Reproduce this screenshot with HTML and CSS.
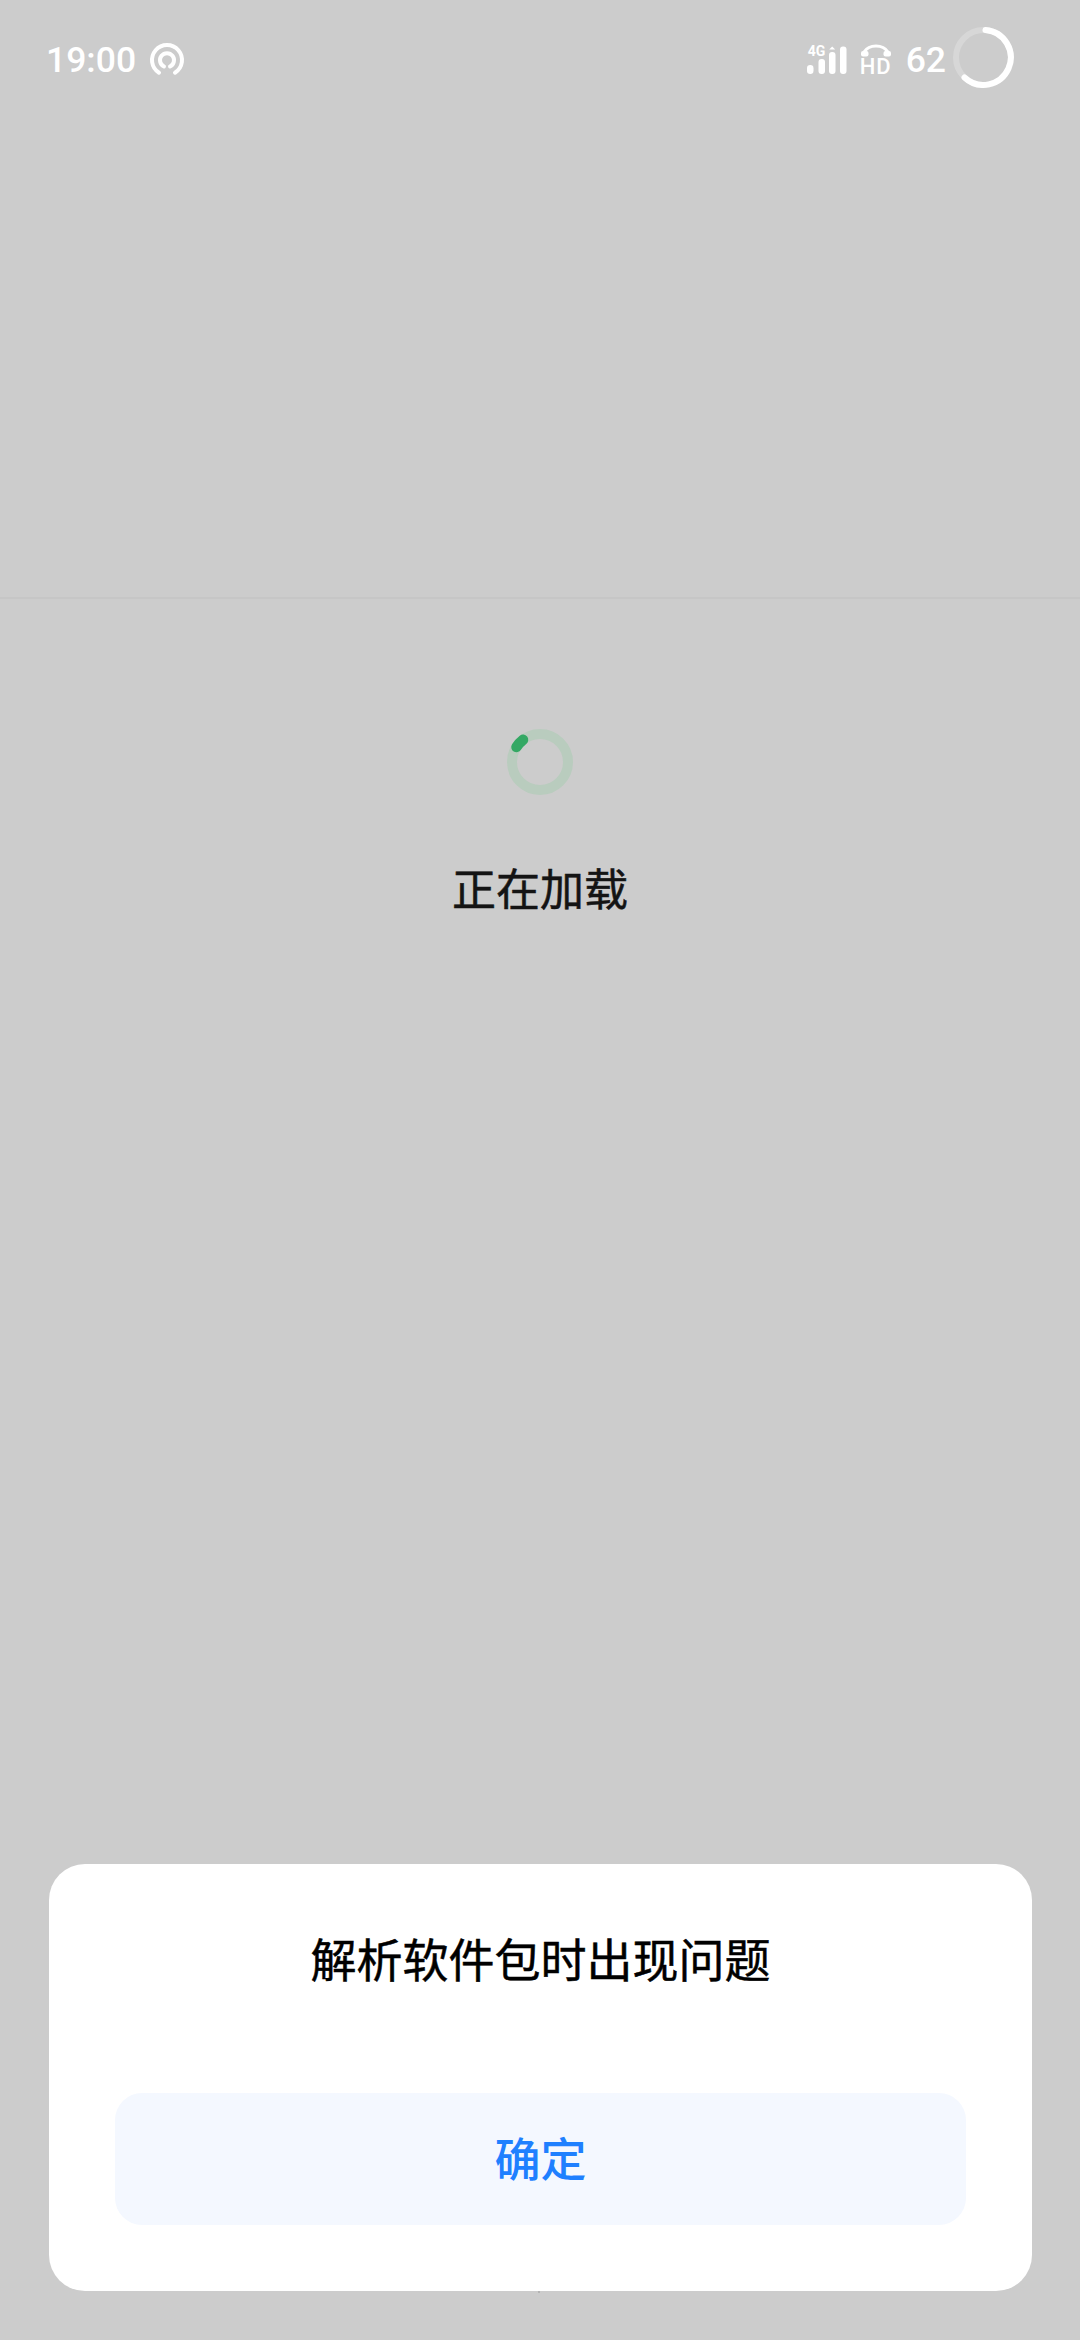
FILE: index.html
```html
<!DOCTYPE html>
<html lang="zh-CN">
<head>
<meta charset="utf-8">
<title>正在加载</title>
<link rel="stylesheet" href="styles.css">
</head>
<body>
<div class="screen">
  <header class="top">
    <div class="status">
      <div class="status-left">
        <span class="status-text">19:00</span>
        <svg class="cast" width="36" height="36" viewBox="0 0 36 36" fill="none" stroke="#fff" stroke-linecap="round">
          <path stroke-width="4" d="M10 30.700A15 15 0 1 1 26 30.700"/>
          <path stroke-width="4" d="M15 24.500A7 7 0 1 1 21 24.500"/>
        </svg>
      </div>
      <div class="status-right">
        <div class="signal">
          <span class="net">4G</span>
          <svg width="40" height="28" viewBox="0 0 40 28" fill="#fff">
            <rect x="0" y="19" width="6.500" height="9" rx="3.200"/>
            <rect x="11.500" y="13" width="6.500" height="15" rx="3"/>
            <rect x="22" y="6" width="6.500" height="22" rx="3"/>
            <path d="M25.200 0.500l3 3h-6z"/>
            <rect x="33" y="0.500" width="6.500" height="27.500" rx="3"/>
          </svg>
        </div>
        <div class="hd">
          <svg width="30" height="13" viewBox="0 0 30 13" fill="#fff">
            <path fill="none" stroke="#fff" stroke-width="3" d="M3 8C6 3.500 10 2 15 2S24 3.500 27 8"/>
            <rect x="0" y="7" width="7.500" height="5.500" rx="2"/>
            <rect x="22.500" y="7" width="7.500" height="5.500" rx="2"/>
          </svg>
          <span class="hd-label">HD</span>
        </div>
        <span class="status-text battery-num">62</span>
        <svg class="battery" width="61" height="61" viewBox="0 0 61 61" fill="none">
          <circle cx="30.500" cy="30.500" r="27.500" stroke="#fff" stroke-opacity=".22" stroke-width="6"/>
          <path d="M32.500 3A27.500 27.500 0 1 1 11.500 50.500" stroke="#fff" stroke-width="6" stroke-linecap="round"/>
        </svg>
      </div>
    </div>
  </header>
  <main class="loader">
    <svg class="spinner" width="66" height="66" viewBox="0 0 66 66" fill="none">
      <circle cx="33" cy="33" r="28" stroke="#b9ccbe" stroke-width="10"/>
      <path d="M9.500 18A28 28 0 0 1 16 10.800" stroke="#34a864" stroke-width="10.500" stroke-linecap="round"/>
    </svg>
    <p class="loader-text">正在加载</p>
  </main>
  <section class="dialog">
    <h1 class="dialog-title">解析软件包时出现问题</h1>
    <button class="dialog-button" type="button">确定</button>
  </section>
</div>
</body>
</html>
```
FILE: styles.css
```css
* {
  box-sizing: border-box;
}

html,
body {
  margin: 0;
  padding: 0;
}

body {
  background: #cccccc;
  font-family: "Noto Sans CJK SC", "Noto Sans", sans-serif;
}

.screen {
  position: relative;
  width: 1080px;
  height: 2340px;
  overflow: hidden;
  background: #cccccc;
  display: flex;
  flex-direction: column;
}

.top {
  height: 599px;
  flex: none;
  border-bottom: 2px solid #c6c6c6;
}

.status {
  display: flex;
  align-items: center;
  justify-content: space-between;
  height: 62px;
  margin-top: 26px;
  padding: 0 66px 0 46px;
}

.status-left,
.status-right {
  display: flex;
  align-items: center;
}

.status-text {
  margin-top: 5px;
  font-family: Roboto, sans-serif;
  font-size: 35.5px;
  line-height: 42px;
  font-weight: 500;
  color: #ffffff;
}

.cast {
  margin-top: 6px;
  margin-left: 13px;
}

.signal {
  position: relative;
  display: flex;
  align-items: flex-end;
  height: 28px;
  margin-top: 5px;
}

.net {
  position: absolute;
  left: 1px;
  top: -2px;
  font-family: Roboto, sans-serif;
  font-size: 14px;
  line-height: 14px;
  font-weight: 700;
  color: #ffffff;
}

.hd {
  display: flex;
  flex-direction: column;
  align-items: center;
  margin-top: 5px;
  margin-left: 14px;
  width: 30px;
}

.hd svg {
  display: block;
}

.hd-label {
  font-family: Roboto, sans-serif;
  font-size: 22px;
  line-height: 16px;
  letter-spacing: 1px;
  margin-top: 2px;
  font-weight: 500;
  color: #ffffff;
}

.battery-num {
  margin-left: 15px;
}

.battery {
  margin-left: 7px;
}

.loader {
  display: flex;
  flex-direction: column;
  align-items: center;
  padding-top: 130px;
}

.spinner {
  display: block;
}

.loader-text {
  margin: 62px 0 0;
  font-size: 44px;
  line-height: 60px;
  font-weight: 400;
  -webkit-text-stroke: 0.5px #141414;
  color: #141414;
}

.dialog {
  position: absolute;
  left: 49px;
  right: 48px;
  bottom: 49px;
  height: 427px;
  padding: 61px 66px 66px;
  background: #ffffff;
  border-radius: 36px;
  display: flex;
  flex-direction: column;
  align-items: stretch;
}

.dialog::after {
  content: "";
  position: absolute;
  left: 489px;
  bottom: -2px;
  width: 2px;
  height: 2px;
  background: #b4b4b4;
}

.dialog-title {
  margin: 0;
  font-size: 46px;
  line-height: 64px;
  font-weight: 400;
  -webkit-text-stroke: 0.5px #000000;
  color: #000000;
  text-align: center;
}

.dialog-button {
  margin-top: auto;
  height: 132px;
  border: 0;
  padding: 0 0 7px;
  border-radius: 27px;
  background: #f4f8ff;
  color: #1f80ff;
  font-family: inherit;
  font-size: 46px;
  font-weight: 500;
}
```
